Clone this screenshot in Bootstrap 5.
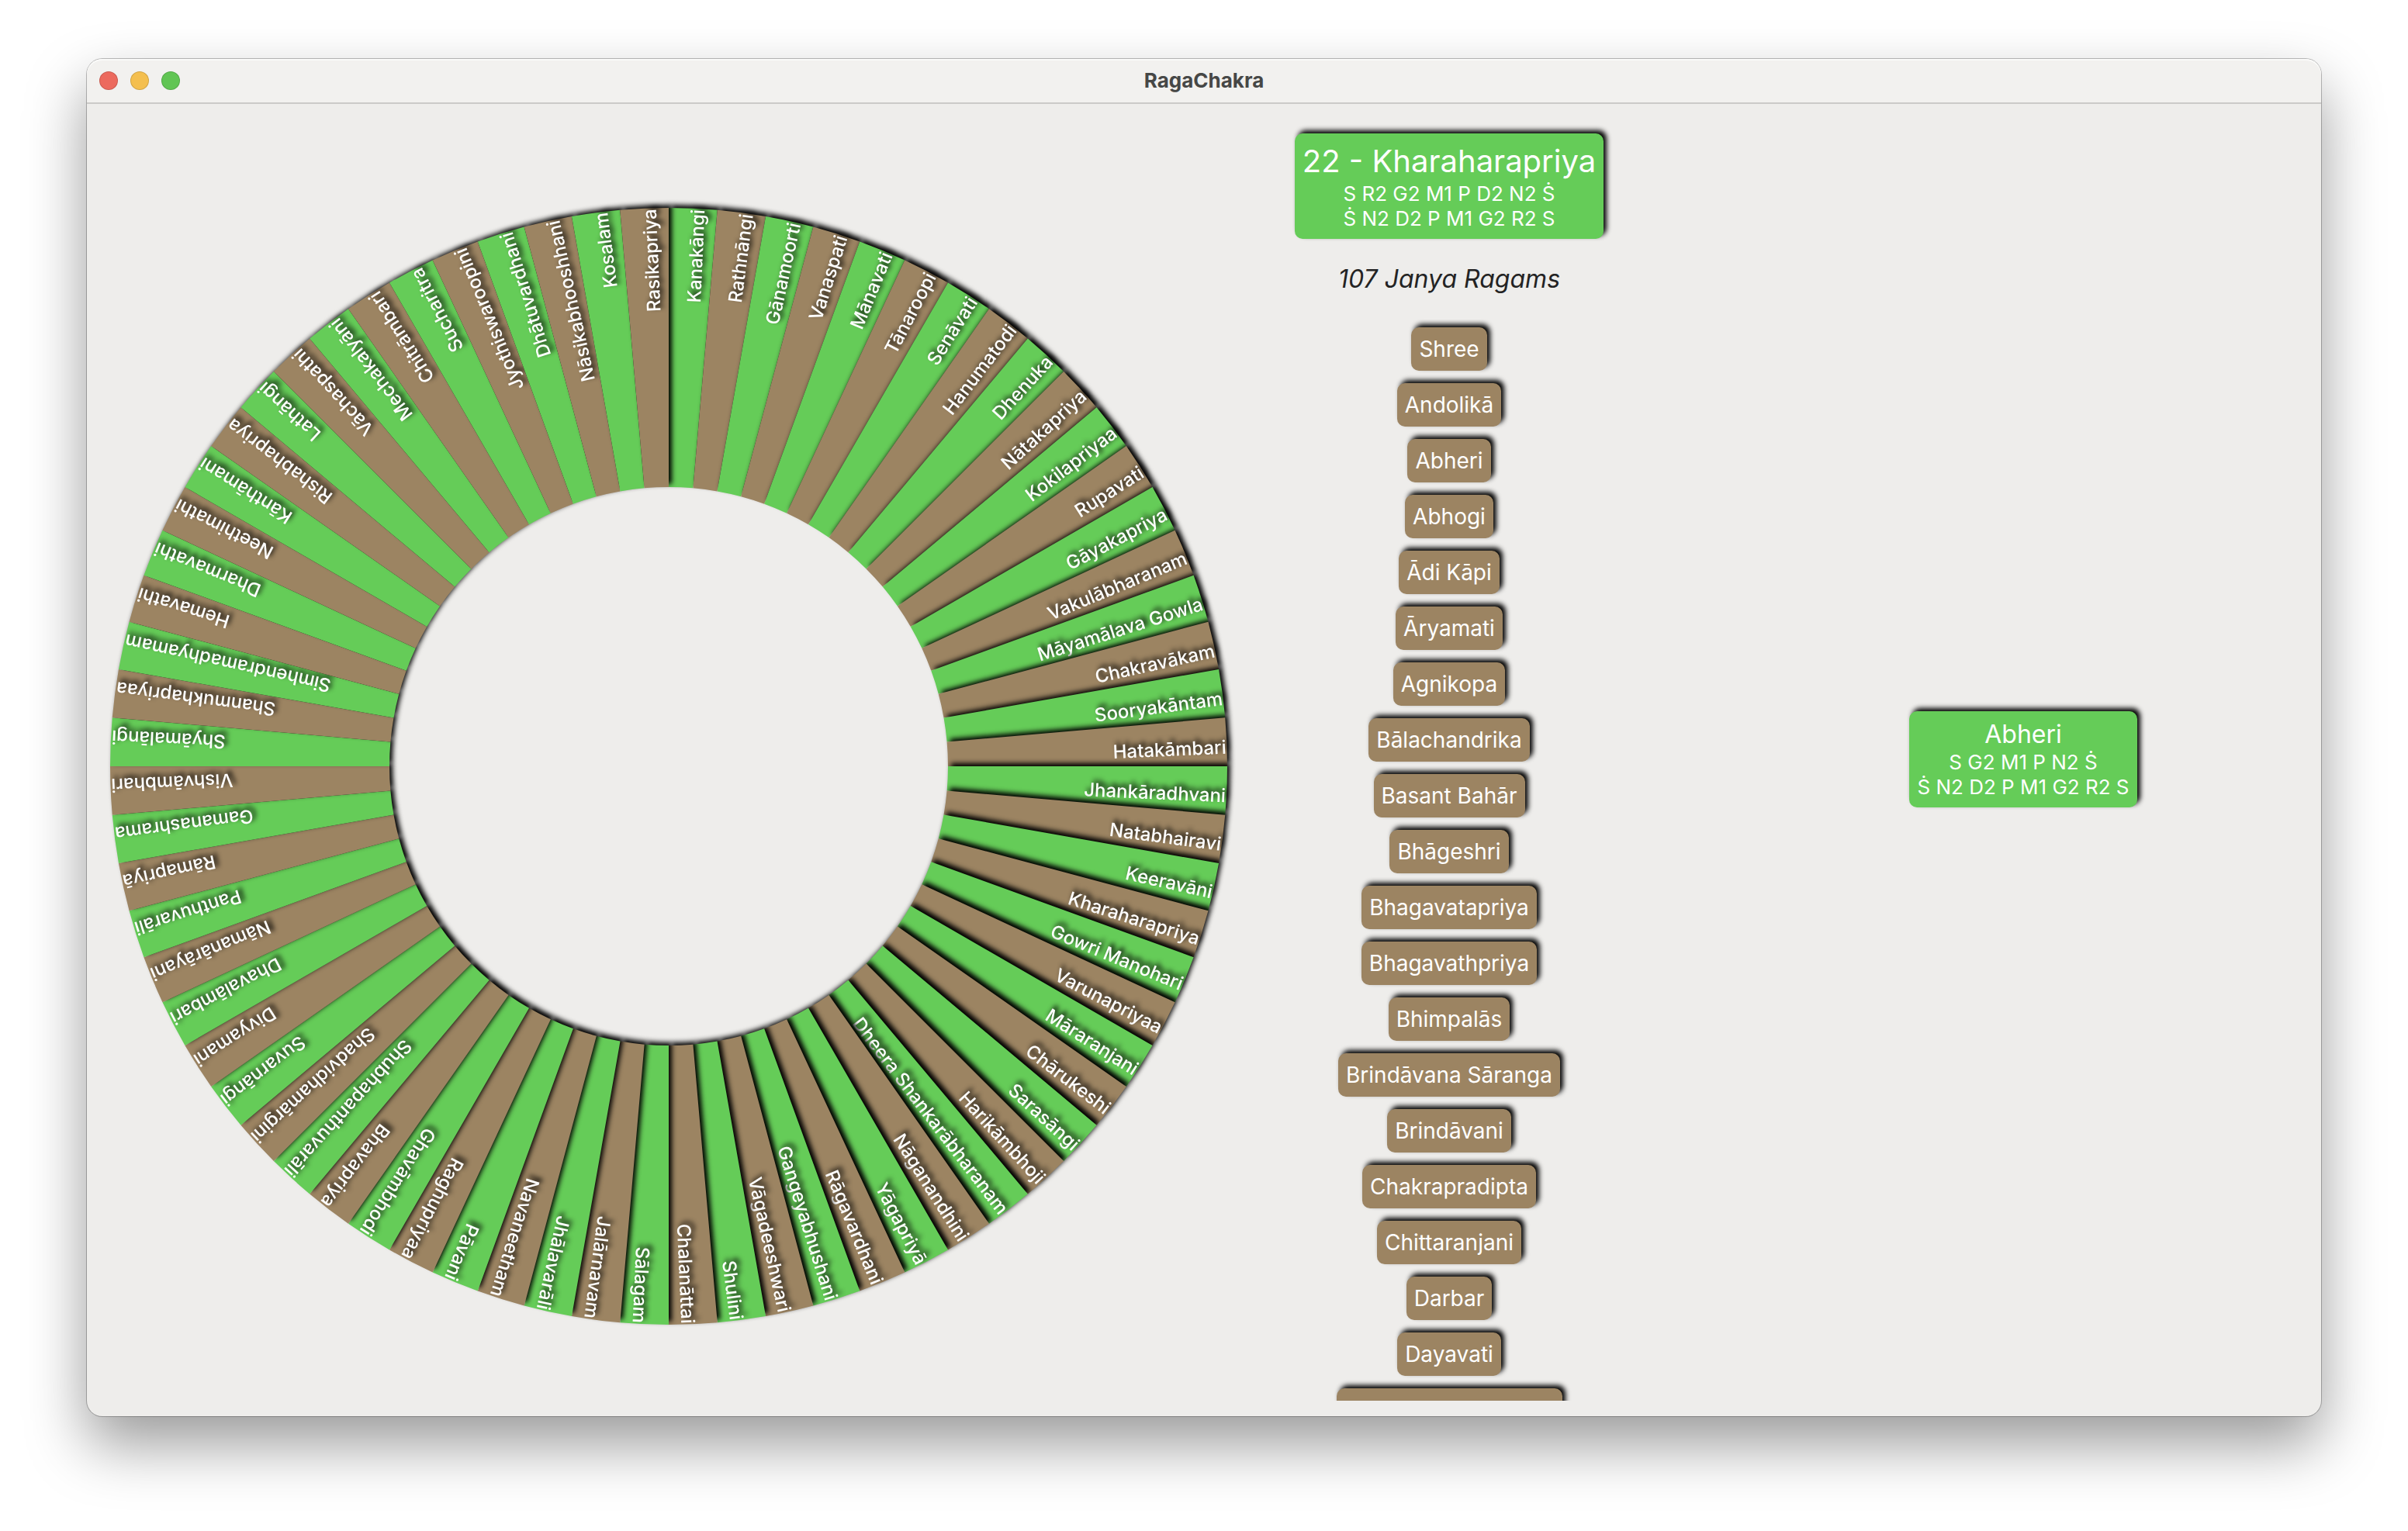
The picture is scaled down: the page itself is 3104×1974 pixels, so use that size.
<!DOCTYPE html>
<html lang="en">
<head>
<meta charset="utf-8">
<meta name="viewport" content="width=device-width, initial-scale=1">
<title>RagaChakra</title>
<link rel="stylesheet" href="https://cdn.jsdelivr.net/npm/bootstrap@5.3.0/dist/css/bootstrap.min.css">
<style>
  :root { --raga-green: #65cc58; --raga-brown: #9c8462; --ink: #232323; }
  body { font-family: Inter, "Noto Sans", sans-serif; color: var(--ink); background: #fff; }
  .desktop { height: 100vh; padding: 76px 112px 148px; }
  .app-window { background: #eeedeb; border-radius: 20px; box-shadow: 0 0 0 1px rgba(0,0,0,.25), 0 36px 78px rgba(0,0,0,.4); }
  .title-bar { height: 58px; background: #f2f1ef; border-bottom: 2px solid #cbcac8; padding: 0 16px; border-radius: 20px 20px 0 0; box-shadow: inset 0 2px 0 #fafaf9; }
  .title-side { flex: 1 1 0; gap: 16px; }
  .app-title { font-size: 26px; line-height: 32px; font-weight: 700; color: #464746; }
  .light { width: 24px; height: 24px; padding: 0; border: 1px solid rgba(0,0,0,.14); border-radius: 50%; }
  .light-close { background: #ec6a5e; }
  .light-min { background: #f4bf4f; }
  .light-zoom { background: #61c554; }

  .panes { display: grid; grid-template-columns: 1500fr 512fr 868fr; grid-template-rows: minmax(0, 1fr); min-height: 0; padding-bottom: 20px; }
  .pane-wheel { padding: 36px 30px 0; }
  .pane-wheel svg { width: 100%; height: auto; overflow: visible; }
  .pane-list { gap: 32px; padding-top: 38px; }
  .pane-detail { padding: 18px 0 0 100px; }

  .slice { filter: drop-shadow(4px -4px 3px #000); cursor: pointer; }
  .slice-green { fill: var(--raga-green); }
  .slice-brown { fill: var(--raga-brown); }
  .slice-name { filter: drop-shadow(4px -4px 3px #000); pointer-events: none; }
  .slice-name text { font-size: 24px; font-weight: 500; fill: #fff; text-anchor: end; }

  .raga-box { color: #fff; background: var(--raga-green); border-radius: 10px; padding: 10px; text-align: center; box-shadow: 4px -4px 6px #000; }
  .raga-box p { font-size: 26px; line-height: 32px; margin: 0; }
  .raga-box h1 { font-size: 40px; line-height: 52px; font-weight: 400; margin: 0; }
  .raga-box h2 { font-size: 32px; line-height: 40px; font-weight: 400; margin: 0; }
  .janya-count { font-size: 32px; line-height: 40px; font-style: italic; margin: 0; }
  .janya-scroll { overflow: hidden; gap: 16px; padding-top: 10px; }
  .btn-janya { --bs-btn-color: #fff; --bs-btn-bg: var(--raga-brown); --bs-btn-hover-color: #fff; --bs-btn-hover-bg: #8b7453; --bs-btn-padding-x: 10px; --bs-btn-padding-y: 10px; --bs-btn-font-size: 28px; --bs-btn-line-height: 36px; --bs-btn-border-width: 0; --bs-btn-border-radius: 10px; flex: none; height: 56px; box-shadow: 4px -4px 6px #000; }
  .janya-next { width: 291px; }
</style>
</head>
<body>
<div class="desktop">
  <div class="app-window d-flex flex-column h-100">
    <header class="title-bar d-flex align-items-center flex-shrink-0">
      <div class="title-side d-flex">
        <button type="button" class="light light-close" aria-label="Close"></button>
        <button type="button" class="light light-min" aria-label="Minimize"></button>
        <button type="button" class="light light-zoom" aria-label="Zoom"></button>
      </div>
      <div class="app-title">RagaChakra</div>
      <div class="title-side"></div>
    </header>

    <main class="panes flex-grow-1">
      <section class="pane-wheel d-flex align-items-center">
        <svg id="wheel" viewBox="-720 -720 1440 1440" role="group" aria-label="Melakarta wheel"></svg>
      </section>

      <section class="pane-list d-flex flex-column align-items-center">
        <div class="raga-box">
          <h1>22 - Kharaharapriya</h1>
          <p>S R2 G2 M1 P D2 N2 Ṡ</p>
          <p>Ṡ N2 D2 P M1 G2 R2 S</p>
        </div>
        <p class="janya-count">107 Janya Ragams</p>
        <div class="janya-scroll d-flex flex-column align-items-center flex-grow-1 w-100">
          <button type="button" class="btn btn-janya">Shree</button>
          <button type="button" class="btn btn-janya">Andolikā</button>
          <button type="button" class="btn btn-janya">Abheri</button>
          <button type="button" class="btn btn-janya">Abhogi</button>
          <button type="button" class="btn btn-janya">Ādi Kāpi</button>
          <button type="button" class="btn btn-janya">Āryamati</button>
          <button type="button" class="btn btn-janya">Agnikopa</button>
          <button type="button" class="btn btn-janya">Bālachandrika</button>
          <button type="button" class="btn btn-janya">Basant Bahār</button>
          <button type="button" class="btn btn-janya">Bhāgeshri</button>
          <button type="button" class="btn btn-janya">Bhagavatapriya</button>
          <button type="button" class="btn btn-janya">Bhagavathpriya</button>
          <button type="button" class="btn btn-janya">Bhimpalās</button>
          <button type="button" class="btn btn-janya">Brindāvana Sāranga</button>
          <button type="button" class="btn btn-janya">Brindāvani</button>
          <button type="button" class="btn btn-janya">Chakrapradipta</button>
          <button type="button" class="btn btn-janya">Chittaranjani</button>
          <button type="button" class="btn btn-janya">Darbar</button>
          <button type="button" class="btn btn-janya">Dayavati</button>
          <button type="button" class="btn btn-janya janya-next" aria-label="Next"></button>
        </div>
      </section>

      <section class="pane-detail d-flex align-items-center justify-content-center">
        <div class="raga-box">
          <h2>Abheri</h2>
          <p>S G2 M1 P N2 Ṡ</p>
          <p>Ṡ N2 D2 P M1 G2 R2 S</p>
        </div>
      </section>
    </main>
  </div>
</div>

<script src="https://cdn.jsdelivr.net/npm/bootstrap@5.3.0/dist/js/bootstrap.bundle.min.js"></script>
<script>
  const ragas = [
    "Kanakāngi", "Rathnāngi", "Gānamoorti", "Vanaspati", "Mānavati", "Tānaroopi",
    "Senāvati", "Hanumatodi", "Dhenuka", "Nātakapriya", "Kokilapriyaa", "Rupavati",
    "Gāyakapriya", "Vakulābharanam", "Māyamālava Gowla", "Chakravākam", "Sooryakāntam", "Hatakāmbari",
    "Jhankāradhvani", "Natabhairavi", "Keeravāni", "Kharaharapriya", "Gowri Manohari", "Varunapriyaa",
    "Māraranjani", "Chārukeshi", "Sarasāngi", "Harikāmbhoji", "Dheera Shankarābharanam", "Nāganandhini",
    "Yāgapriyā", "Rāgavardhani", "Gangeyabhushani", "Vāgadeeshwari", "Shulini", "Chalanāttai",
    "Sālagam", "Jalārnavam", "Jhālavarāli", "Navaneetham", "Pāvani", "Raghupriyaa",
    "Ghavāmbhodi", "Bhavapriya", "Shubhapanthuvarāli", "Shadvidhamārgini", "Suvarnāngi", "Divyamani",
    "Dhavalāmbari", "Nāmanārāyani", "Panthuvarāli", "Rāmapriyā", "Gamanashrama", "Vishvāmbhari",
    "Shyāmalāngi", "Shanmukhapriyaa", "Simhendramadhyamam", "Hemavathi", "Dharmavathi", "Neethimathi",
    "Kānthāmani", "Rishabhapriya", "Lathāngi", "Vāchaspathi", "Mechakalyāni", "Chitrāmbari",
    "Sucharitra", "Jyothiswaroopini", "Dhātuvardhani", "Nāsikabhooshhani", "Kosalam", "Rasikapriya"
  ];
  const outer = 720, inner = 360, step = 360 / ragas.length;
  const point = (r, deg) => {
    const a = (deg - 90) * Math.PI / 180;
    return (r * Math.cos(a)).toFixed(2) + " " + (r * Math.sin(a)).toFixed(2);
  };
  // Slices are painted in order, so each one's shadow falls on the slice before it.
  document.getElementById("wheel").innerHTML = ragas.map((name, i) => {
    const from = i * step, to = from + step;
    const d = `M${point(inner, from)}L${point(outer, from)}A${outer} ${outer} 0 0 1 ${point(outer, to)}` +
              `L${point(inner, to)}A${inner} ${inner} 0 0 0 ${point(inner, from)}Z`;
    return `<g class="slice"><path class="slice-${i % 2 ? "brown" : "green"}" d="${d}"/></g>` +
           `<g class="slice-name"><text x="719" y="15" transform="rotate(${from + step / 2 - 90})">${name}</text></g>`;
  }).join("");
</script>
</body>
</html>
